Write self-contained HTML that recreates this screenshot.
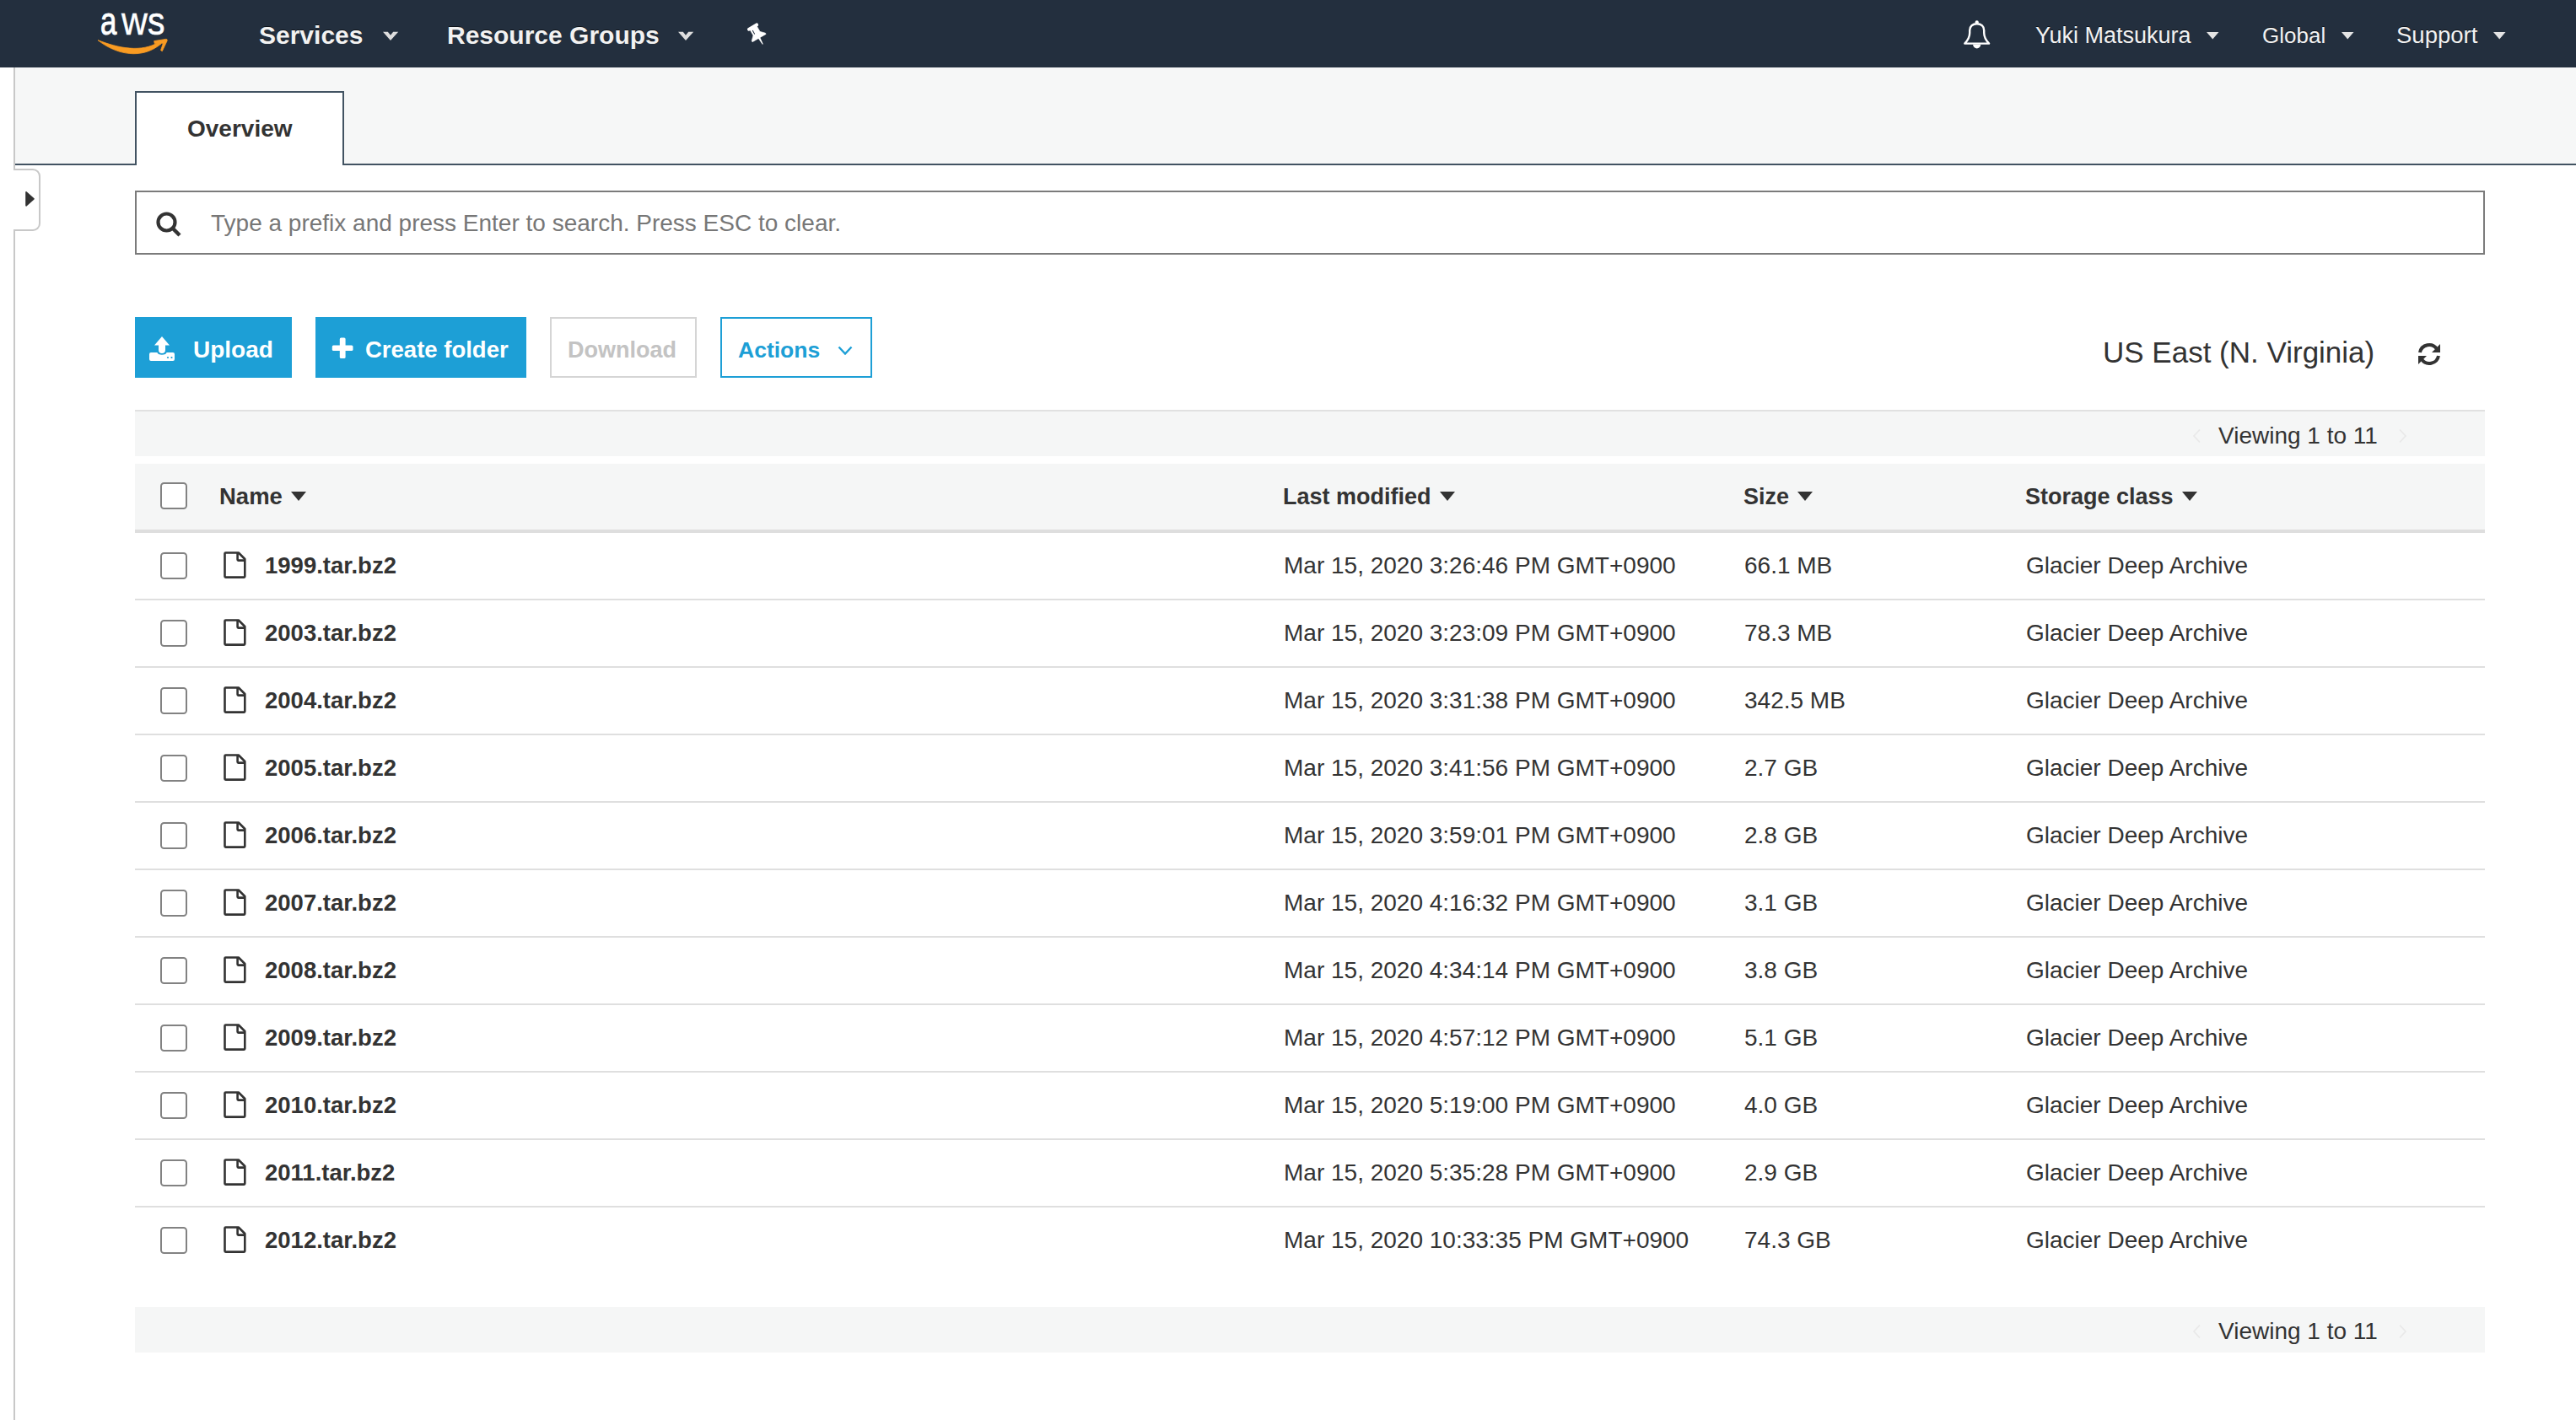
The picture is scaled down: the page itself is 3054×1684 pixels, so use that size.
<!DOCTYPE html>
<html><head><meta charset="utf-8"><title>S3</title>
<style>
html,body{margin:0;padding:0;}
body{width:3054px;height:1684px;position:relative;overflow:hidden;background:#fff;font-family:"Liberation Sans", sans-serif;}
.t{position:absolute;white-space:nowrap;font-family:"Liberation Sans", sans-serif;}
</style></head><body>
<div style="position:absolute;left:0px;top:0px;width:3054px;height:80px;background:#232f3e"></div>
<div class="t" style="left:118.72px;top:1px;font-size:47px;line-height:47px;color:#fff;-webkit-text-stroke:1.0px #fff;transform:scaleX(0.74);transform-origin:0 0">a</div>
<div class="t" style="left:143.60px;top:1px;font-size:47px;line-height:47px;color:#fff;-webkit-text-stroke:0.4px #fff;transform:scaleX(0.91);transform-origin:0 0">w</div>
<div class="t" style="left:175.33px;top:1px;font-size:47px;line-height:47px;color:#fff;-webkit-text-stroke:0.6px #fff;transform:scaleX(0.87);transform-origin:0 0">s</div>
<svg style="position:absolute;left:100px;top:35px" width="110" height="40" viewBox="0 0 110 40"><path d="M16 12.6 C 38 30, 68 36, 91 17 L 89 14.5 C 68 28, 40 22, 16 12.6 Z" fill="#f99b22" stroke="#f99b22" stroke-width="0.8" stroke-linejoin="round"/><path d="M82.7 13.6 L 96.6 11.4 Q 98.6 11.2 98.2 13.2 L 92.3 25.7 L 90.6 24.6 L 93.4 16.3 L 83.2 16.6 Z" fill="#f99b22" stroke="#f99b22" stroke-width="0.8" stroke-linejoin="round"/></svg>
<div class="t" style="left:307px;top:27px;font-size:30px;line-height:30px;font-weight:bold;color:#f2f2f2;text-shadow:0 -1px 0 rgba(0,0,0,0.6)">Services</div>
<div class="t" style="left:530px;top:27px;font-size:30px;line-height:30px;font-weight:bold;color:#f2f2f2;text-shadow:0 -1px 0 rgba(0,0,0,0.6)">Resource Groups</div>
<svg style="position:absolute;left:453px;top:36px" width="20" height="14" viewBox="0 0 20 14"><path d="M1 1.8 H6.8 L10 5.7 L13.2 1.8 H19.2 L10 12 Z" fill="#dedede"/></svg>
<svg style="position:absolute;left:803px;top:36px" width="20" height="14" viewBox="0 0 20 14"><path d="M1 1.8 H6.8 L10 5.7 L13.2 1.8 H19.2 L10 12 Z" fill="#dedede"/></svg>
<svg style="position:absolute;left:870px;top:15px" width="55" height="50" viewBox="0 0 55 50"><g transform="translate(21.6 15.4) rotate(-30)"><rect x="-7.2" y="0" width="14.4" height="3.8" rx="1.6" fill="#fff"/><path d="M-4.6 3 H4.6 V10.8 L9.3 15.5 V16.9 H-9.3 V15.5 L-4.6 10.8 Z" fill="#fff" stroke="#fff" stroke-width="0.6" stroke-linejoin="round"/><path d="M-1.3 16.5 H1.3 L0.5 25.5 H-0.5 Z" fill="#fff"/><path d="M-2.3 5.2 V10.2" stroke="#232f3e" stroke-width="1"/></g></svg>
<svg style="position:absolute;left:2315px;top:15px" width="60" height="55" viewBox="0 0 60 55"><path d="M14.3 36.6 C 17.8 33, 20.2 29.5, 20.2 24 L 20.2 21 C 20.2 16, 23.8 13.2, 28.7 13.2 C 33.6 13.2, 37.2 16, 37.2 21 L 37.2 24 C 37.2 29.5, 39.6 33, 43.1 36.6 Z" fill="none" stroke="#fff" stroke-width="2.4" stroke-linejoin="round"/><circle cx="28.7" cy="11.3" r="2.1" fill="#fff"/><path d="M24.1 37.8 A 4.6 4.6 0 0 0 33.3 37.8 Z" fill="#fff"/></svg>
<div class="t" style="left:2413px;top:29px;font-size:27px;line-height:27px;font-weight:normal;color:#f2f2f2;text-shadow:0 -1px 0 rgba(0,0,0,0.6)">Yuki Matsukura</div>
<svg style="position:absolute;left:2616px;top:38px" width="14.5" height="8.5" viewBox="0 0 14.5 8.5"><path d="M0 0 H14.5 L7.25 8.5 Z" fill="#e4e4e4"/></svg>
<div class="t" style="left:2682px;top:29px;font-size:26px;line-height:26px;font-weight:normal;color:#f2f2f2;text-shadow:0 -1px 0 rgba(0,0,0,0.6)">Global</div>
<svg style="position:absolute;left:2776px;top:38px" width="14.5" height="8.5" viewBox="0 0 14.5 8.5"><path d="M0 0 H14.5 L7.25 8.5 Z" fill="#e4e4e4"/></svg>
<div class="t" style="left:2841px;top:28px;font-size:27.5px;line-height:27.5px;font-weight:normal;color:#f2f2f2;text-shadow:0 -1px 0 rgba(0,0,0,0.6)">Support</div>
<svg style="position:absolute;left:2956px;top:38px" width="14.5" height="8.5" viewBox="0 0 14.5 8.5"><path d="M0 0 H14.5 L7.25 8.5 Z" fill="#e4e4e4"/></svg>
<div style="position:absolute;left:18px;top:80px;width:3036px;height:114px;background:#f6f7f7"></div>
<div style="position:absolute;left:18px;top:194px;width:3036px;height:2px;background:#425362"></div>
<div style="position:absolute;left:16px;top:80px;width:2px;height:122px;background:#c8c8c8"></div>
<div style="position:absolute;left:16px;top:200px;width:32px;height:74px;box-sizing:border-box;border:2px solid #c8c8c8;border-left:none;border-radius:0 9px 9px 0;background:#fff"></div>
<div style="position:absolute;left:16px;top:272px;width:2px;height:1412px;background:#c8c8c8"></div>
<svg style="position:absolute;left:29px;top:226px" width="13" height="20" viewBox="0 0 13 20"><path d="M2 1.8 L11 9.8 L2 17.8 Z" fill="#333" stroke="#333" stroke-width="1.6" stroke-linejoin="round"/></svg>
<div style="position:absolute;left:160px;top:108px;width:248px;height:88px;box-sizing:border-box;border:2px solid #425362;border-bottom:none;background:#fff"></div>
<div class="t" style="left:222px;top:139px;font-size:28px;line-height:28px;font-weight:bold;color:#333;">Overview</div>
<div style="position:absolute;left:160px;top:226px;width:2786px;height:76px;box-sizing:border-box;border:2px solid #7b7b7b;background:#fff"></div>
<svg style="position:absolute;left:183px;top:249px" width="34" height="34" viewBox="0 0 34 34"><circle cx="14.5" cy="14.5" r="10" fill="none" stroke="#333" stroke-width="4.2"/><path d="M21.5 21.5 L30 30" stroke="#333" stroke-width="4.5" stroke-linecap="butt"/></svg>
<div class="t" style="left:250px;top:251px;font-size:28px;line-height:28px;font-weight:normal;color:#777;">Type a prefix and press Enter to search. Press ESC to clear.</div>
<div style="position:absolute;left:160px;top:376px;width:186px;height:72px;background:#1d9fd6"></div>
<svg style="position:absolute;left:176px;top:398px" width="32" height="32" viewBox="0 0 32 32"><path d="M7 11.5 L16 1 L25 11.5 H20 V17 A4 4 0 0 1 12 17 V11.5 Z" fill="#fff"/><path d="M1 22 Q1 20 3 20 H10.5 A 5.5 2.8 0 0 0 21.5 20 H29 Q31 20 31 22 V28 Q31 30 29 30 H3 Q1 30 1 28 Z" fill="#fff"/><circle cx="23" cy="26" r="1.1" fill="#1d9fd6"/><circle cx="27.5" cy="26" r="1.1" fill="#1d9fd6"/></svg>
<div class="t" style="left:229px;top:401px;font-size:28px;line-height:28px;font-weight:bold;color:#fff;">Upload</div>
<div style="position:absolute;left:374px;top:376px;width:250px;height:72px;background:#1d9fd6"></div>
<svg style="position:absolute;left:392px;top:398px" width="28" height="28" viewBox="0 0 28 28"><rect x="10.8" y="2.5" width="6.8" height="24.5" rx="1.6" fill="#fff"/><rect x="1.8" y="11.4" width="24.7" height="6.6" rx="1.6" fill="#fff"/></svg>
<div class="t" style="left:433px;top:401px;font-size:27.5px;line-height:27.5px;font-weight:bold;color:#fff;">Create folder</div>
<div style="position:absolute;left:652px;top:376px;width:174px;height:72px;box-sizing:border-box;border:2px solid #d5d5d5;background:#fff"></div>
<div class="t" style="left:673px;top:402px;font-size:27px;line-height:27px;font-weight:bold;color:#c3c3c3;">Download</div>
<div style="position:absolute;left:854px;top:376px;width:180px;height:72px;box-sizing:border-box;border:2px solid #1d9fd6;background:#fff"></div>
<div class="t" style="left:875px;top:402px;font-size:26.5px;line-height:26.5px;font-weight:bold;color:#1d9fd6;">Actions</div>
<svg style="position:absolute;left:993px;top:410px" width="18" height="11" viewBox="0 0 18 11"><path d="M1.5 1.5 L9.0 9.5 L16.5 1.5" fill="none" stroke="#1d9fd6" stroke-width="2.4"/></svg>
<div class="t" style="left:2493px;top:400px;font-size:35px;line-height:35px;font-weight:normal;color:#333;">US East (N. Virginia)</div>
<svg style="position:absolute;left:2864px;top:405px" width="32" height="30" viewBox="0 0 32 30"><path d="M5 13 A 11 11 0 0 1 25 9" fill="none" stroke="#333" stroke-width="4"/><path d="M29 3 V13 H19 Z" fill="#333"/><path d="M27 17 A 11 11 0 0 1 7 21" fill="none" stroke="#333" stroke-width="4"/><path d="M3 27 V17 H13 Z" fill="#333"/></svg>
<div style="position:absolute;left:160px;top:486px;width:2786px;height:55px;background:#f5f6f6;border-top:2px solid #e1e1e1;box-sizing:border-box"></div>
<div class="t" style="left:2630px;top:503px;font-size:28px;line-height:28px;font-weight:normal;color:#333;">Viewing 1 to 11</div>
<svg style="position:absolute;left:2599px;top:508px" width="11" height="18" viewBox="0 0 11 18"><path d="M9 1.5 L2 9 L9 16.5" fill="none" stroke="#e9e9e9" stroke-width="1.8"/></svg>
<svg style="position:absolute;left:2843px;top:508px" width="11" height="18" viewBox="0 0 11 18"><path d="M2 1.5 L9 9 L2 16.5" fill="none" stroke="#e9e9e9" stroke-width="1.8"/></svg>
<div style="position:absolute;left:160px;top:550px;width:2786px;height:82px;box-sizing:border-box;background:#f5f6f6;border-bottom:4px solid #dedede"></div>
<div style="position:absolute;left:190px;top:572px;width:32px;height:32px;box-sizing:border-box;border:2.2px solid #828282;border-radius:4.5px;background:#fff"></div>
<div class="t" style="left:260px;top:575px;font-size:27.5px;line-height:27.5px;font-weight:bold;color:#333;">Name</div>
<svg style="position:absolute;left:345px;top:583px" width="18" height="11" viewBox="0 0 18 11"><path d="M0 0 H18 L9.0 11 Z" fill="#333"/></svg>
<div class="t" style="left:1521px;top:576px;font-size:27px;line-height:27px;font-weight:bold;color:#333;">Last modified</div>
<svg style="position:absolute;left:1707px;top:583px" width="18" height="11" viewBox="0 0 18 11"><path d="M0 0 H18 L9.0 11 Z" fill="#333"/></svg>
<div class="t" style="left:2067px;top:576px;font-size:27px;line-height:27px;font-weight:bold;color:#333;">Size</div>
<svg style="position:absolute;left:2131px;top:583px" width="18" height="11" viewBox="0 0 18 11"><path d="M0 0 H18 L9.0 11 Z" fill="#333"/></svg>
<div class="t" style="left:2401px;top:576px;font-size:27px;line-height:27px;font-weight:bold;color:#333;">Storage class</div>
<svg style="position:absolute;left:2587px;top:583px" width="18" height="11" viewBox="0 0 18 11"><path d="M0 0 H18 L9.0 11 Z" fill="#333"/></svg>
<div style="position:absolute;left:190px;top:654.5px;width:32px;height:32px;box-sizing:border-box;border:2.2px solid #828282;border-radius:4.5px;background:#fff"></div>
<svg style="position:absolute;left:264px;top:654px" width="29" height="33" viewBox="0 0 29 33"><path d="M2.5 2.5 Q2.5 1.5 3.5 1.5 H18.8 L26.3 9 V29.6 Q26.3 30.6 25.3 30.6 H3.5 Q2.5 30.6 2.5 29.6 Z" fill="none" stroke="#333" stroke-width="2.6" stroke-linejoin="round"/><path d="M17.6 1.5 V9.6 Q17.6 10.6 18.6 10.6 H26.3" fill="none" stroke="#333" stroke-width="2.6" stroke-linejoin="round"/></svg>
<div class="t" style="left:314px;top:657px;font-size:27.5px;line-height:27.5px;font-weight:bold;color:#333;">1999.tar.bz2</div>
<div class="t" style="left:1522px;top:657px;font-size:28px;line-height:28px;font-weight:normal;color:#333;">Mar 15, 2020 3:26:46 PM GMT+0900</div>
<div class="t" style="left:2068px;top:657px;font-size:28px;line-height:28px;font-weight:normal;color:#333;">66.1 MB</div>
<div class="t" style="left:2402px;top:657px;font-size:28px;line-height:28px;font-weight:normal;color:#333;">Glacier Deep Archive</div>
<div style="position:absolute;left:160px;top:710px;width:2786px;height:2px;background:#dfdfdf"></div>
<div style="position:absolute;left:190px;top:734.5px;width:32px;height:32px;box-sizing:border-box;border:2.2px solid #828282;border-radius:4.5px;background:#fff"></div>
<svg style="position:absolute;left:264px;top:734px" width="29" height="33" viewBox="0 0 29 33"><path d="M2.5 2.5 Q2.5 1.5 3.5 1.5 H18.8 L26.3 9 V29.6 Q26.3 30.6 25.3 30.6 H3.5 Q2.5 30.6 2.5 29.6 Z" fill="none" stroke="#333" stroke-width="2.6" stroke-linejoin="round"/><path d="M17.6 1.5 V9.6 Q17.6 10.6 18.6 10.6 H26.3" fill="none" stroke="#333" stroke-width="2.6" stroke-linejoin="round"/></svg>
<div class="t" style="left:314px;top:737px;font-size:27.5px;line-height:27.5px;font-weight:bold;color:#333;">2003.tar.bz2</div>
<div class="t" style="left:1522px;top:737px;font-size:28px;line-height:28px;font-weight:normal;color:#333;">Mar 15, 2020 3:23:09 PM GMT+0900</div>
<div class="t" style="left:2068px;top:737px;font-size:28px;line-height:28px;font-weight:normal;color:#333;">78.3 MB</div>
<div class="t" style="left:2402px;top:737px;font-size:28px;line-height:28px;font-weight:normal;color:#333;">Glacier Deep Archive</div>
<div style="position:absolute;left:160px;top:790px;width:2786px;height:2px;background:#dfdfdf"></div>
<div style="position:absolute;left:190px;top:814.5px;width:32px;height:32px;box-sizing:border-box;border:2.2px solid #828282;border-radius:4.5px;background:#fff"></div>
<svg style="position:absolute;left:264px;top:814px" width="29" height="33" viewBox="0 0 29 33"><path d="M2.5 2.5 Q2.5 1.5 3.5 1.5 H18.8 L26.3 9 V29.6 Q26.3 30.6 25.3 30.6 H3.5 Q2.5 30.6 2.5 29.6 Z" fill="none" stroke="#333" stroke-width="2.6" stroke-linejoin="round"/><path d="M17.6 1.5 V9.6 Q17.6 10.6 18.6 10.6 H26.3" fill="none" stroke="#333" stroke-width="2.6" stroke-linejoin="round"/></svg>
<div class="t" style="left:314px;top:817px;font-size:27.5px;line-height:27.5px;font-weight:bold;color:#333;">2004.tar.bz2</div>
<div class="t" style="left:1522px;top:817px;font-size:28px;line-height:28px;font-weight:normal;color:#333;">Mar 15, 2020 3:31:38 PM GMT+0900</div>
<div class="t" style="left:2068px;top:817px;font-size:28px;line-height:28px;font-weight:normal;color:#333;">342.5 MB</div>
<div class="t" style="left:2402px;top:817px;font-size:28px;line-height:28px;font-weight:normal;color:#333;">Glacier Deep Archive</div>
<div style="position:absolute;left:160px;top:870px;width:2786px;height:2px;background:#dfdfdf"></div>
<div style="position:absolute;left:190px;top:894.5px;width:32px;height:32px;box-sizing:border-box;border:2.2px solid #828282;border-radius:4.5px;background:#fff"></div>
<svg style="position:absolute;left:264px;top:894px" width="29" height="33" viewBox="0 0 29 33"><path d="M2.5 2.5 Q2.5 1.5 3.5 1.5 H18.8 L26.3 9 V29.6 Q26.3 30.6 25.3 30.6 H3.5 Q2.5 30.6 2.5 29.6 Z" fill="none" stroke="#333" stroke-width="2.6" stroke-linejoin="round"/><path d="M17.6 1.5 V9.6 Q17.6 10.6 18.6 10.6 H26.3" fill="none" stroke="#333" stroke-width="2.6" stroke-linejoin="round"/></svg>
<div class="t" style="left:314px;top:897px;font-size:27.5px;line-height:27.5px;font-weight:bold;color:#333;">2005.tar.bz2</div>
<div class="t" style="left:1522px;top:897px;font-size:28px;line-height:28px;font-weight:normal;color:#333;">Mar 15, 2020 3:41:56 PM GMT+0900</div>
<div class="t" style="left:2068px;top:897px;font-size:28px;line-height:28px;font-weight:normal;color:#333;">2.7 GB</div>
<div class="t" style="left:2402px;top:897px;font-size:28px;line-height:28px;font-weight:normal;color:#333;">Glacier Deep Archive</div>
<div style="position:absolute;left:160px;top:950px;width:2786px;height:2px;background:#dfdfdf"></div>
<div style="position:absolute;left:190px;top:974.5px;width:32px;height:32px;box-sizing:border-box;border:2.2px solid #828282;border-radius:4.5px;background:#fff"></div>
<svg style="position:absolute;left:264px;top:974px" width="29" height="33" viewBox="0 0 29 33"><path d="M2.5 2.5 Q2.5 1.5 3.5 1.5 H18.8 L26.3 9 V29.6 Q26.3 30.6 25.3 30.6 H3.5 Q2.5 30.6 2.5 29.6 Z" fill="none" stroke="#333" stroke-width="2.6" stroke-linejoin="round"/><path d="M17.6 1.5 V9.6 Q17.6 10.6 18.6 10.6 H26.3" fill="none" stroke="#333" stroke-width="2.6" stroke-linejoin="round"/></svg>
<div class="t" style="left:314px;top:977px;font-size:27.5px;line-height:27.5px;font-weight:bold;color:#333;">2006.tar.bz2</div>
<div class="t" style="left:1522px;top:977px;font-size:28px;line-height:28px;font-weight:normal;color:#333;">Mar 15, 2020 3:59:01 PM GMT+0900</div>
<div class="t" style="left:2068px;top:977px;font-size:28px;line-height:28px;font-weight:normal;color:#333;">2.8 GB</div>
<div class="t" style="left:2402px;top:977px;font-size:28px;line-height:28px;font-weight:normal;color:#333;">Glacier Deep Archive</div>
<div style="position:absolute;left:160px;top:1030px;width:2786px;height:2px;background:#dfdfdf"></div>
<div style="position:absolute;left:190px;top:1054.5px;width:32px;height:32px;box-sizing:border-box;border:2.2px solid #828282;border-radius:4.5px;background:#fff"></div>
<svg style="position:absolute;left:264px;top:1054px" width="29" height="33" viewBox="0 0 29 33"><path d="M2.5 2.5 Q2.5 1.5 3.5 1.5 H18.8 L26.3 9 V29.6 Q26.3 30.6 25.3 30.6 H3.5 Q2.5 30.6 2.5 29.6 Z" fill="none" stroke="#333" stroke-width="2.6" stroke-linejoin="round"/><path d="M17.6 1.5 V9.6 Q17.6 10.6 18.6 10.6 H26.3" fill="none" stroke="#333" stroke-width="2.6" stroke-linejoin="round"/></svg>
<div class="t" style="left:314px;top:1057px;font-size:27.5px;line-height:27.5px;font-weight:bold;color:#333;">2007.tar.bz2</div>
<div class="t" style="left:1522px;top:1057px;font-size:28px;line-height:28px;font-weight:normal;color:#333;">Mar 15, 2020 4:16:32 PM GMT+0900</div>
<div class="t" style="left:2068px;top:1057px;font-size:28px;line-height:28px;font-weight:normal;color:#333;">3.1 GB</div>
<div class="t" style="left:2402px;top:1057px;font-size:28px;line-height:28px;font-weight:normal;color:#333;">Glacier Deep Archive</div>
<div style="position:absolute;left:160px;top:1110px;width:2786px;height:2px;background:#dfdfdf"></div>
<div style="position:absolute;left:190px;top:1134.5px;width:32px;height:32px;box-sizing:border-box;border:2.2px solid #828282;border-radius:4.5px;background:#fff"></div>
<svg style="position:absolute;left:264px;top:1134px" width="29" height="33" viewBox="0 0 29 33"><path d="M2.5 2.5 Q2.5 1.5 3.5 1.5 H18.8 L26.3 9 V29.6 Q26.3 30.6 25.3 30.6 H3.5 Q2.5 30.6 2.5 29.6 Z" fill="none" stroke="#333" stroke-width="2.6" stroke-linejoin="round"/><path d="M17.6 1.5 V9.6 Q17.6 10.6 18.6 10.6 H26.3" fill="none" stroke="#333" stroke-width="2.6" stroke-linejoin="round"/></svg>
<div class="t" style="left:314px;top:1137px;font-size:27.5px;line-height:27.5px;font-weight:bold;color:#333;">2008.tar.bz2</div>
<div class="t" style="left:1522px;top:1137px;font-size:28px;line-height:28px;font-weight:normal;color:#333;">Mar 15, 2020 4:34:14 PM GMT+0900</div>
<div class="t" style="left:2068px;top:1137px;font-size:28px;line-height:28px;font-weight:normal;color:#333;">3.8 GB</div>
<div class="t" style="left:2402px;top:1137px;font-size:28px;line-height:28px;font-weight:normal;color:#333;">Glacier Deep Archive</div>
<div style="position:absolute;left:160px;top:1190px;width:2786px;height:2px;background:#dfdfdf"></div>
<div style="position:absolute;left:190px;top:1214.5px;width:32px;height:32px;box-sizing:border-box;border:2.2px solid #828282;border-radius:4.5px;background:#fff"></div>
<svg style="position:absolute;left:264px;top:1214px" width="29" height="33" viewBox="0 0 29 33"><path d="M2.5 2.5 Q2.5 1.5 3.5 1.5 H18.8 L26.3 9 V29.6 Q26.3 30.6 25.3 30.6 H3.5 Q2.5 30.6 2.5 29.6 Z" fill="none" stroke="#333" stroke-width="2.6" stroke-linejoin="round"/><path d="M17.6 1.5 V9.6 Q17.6 10.6 18.6 10.6 H26.3" fill="none" stroke="#333" stroke-width="2.6" stroke-linejoin="round"/></svg>
<div class="t" style="left:314px;top:1217px;font-size:27.5px;line-height:27.5px;font-weight:bold;color:#333;">2009.tar.bz2</div>
<div class="t" style="left:1522px;top:1217px;font-size:28px;line-height:28px;font-weight:normal;color:#333;">Mar 15, 2020 4:57:12 PM GMT+0900</div>
<div class="t" style="left:2068px;top:1217px;font-size:28px;line-height:28px;font-weight:normal;color:#333;">5.1 GB</div>
<div class="t" style="left:2402px;top:1217px;font-size:28px;line-height:28px;font-weight:normal;color:#333;">Glacier Deep Archive</div>
<div style="position:absolute;left:160px;top:1270px;width:2786px;height:2px;background:#dfdfdf"></div>
<div style="position:absolute;left:190px;top:1294.5px;width:32px;height:32px;box-sizing:border-box;border:2.2px solid #828282;border-radius:4.5px;background:#fff"></div>
<svg style="position:absolute;left:264px;top:1294px" width="29" height="33" viewBox="0 0 29 33"><path d="M2.5 2.5 Q2.5 1.5 3.5 1.5 H18.8 L26.3 9 V29.6 Q26.3 30.6 25.3 30.6 H3.5 Q2.5 30.6 2.5 29.6 Z" fill="none" stroke="#333" stroke-width="2.6" stroke-linejoin="round"/><path d="M17.6 1.5 V9.6 Q17.6 10.6 18.6 10.6 H26.3" fill="none" stroke="#333" stroke-width="2.6" stroke-linejoin="round"/></svg>
<div class="t" style="left:314px;top:1297px;font-size:27.5px;line-height:27.5px;font-weight:bold;color:#333;">2010.tar.bz2</div>
<div class="t" style="left:1522px;top:1297px;font-size:28px;line-height:28px;font-weight:normal;color:#333;">Mar 15, 2020 5:19:00 PM GMT+0900</div>
<div class="t" style="left:2068px;top:1297px;font-size:28px;line-height:28px;font-weight:normal;color:#333;">4.0 GB</div>
<div class="t" style="left:2402px;top:1297px;font-size:28px;line-height:28px;font-weight:normal;color:#333;">Glacier Deep Archive</div>
<div style="position:absolute;left:160px;top:1350px;width:2786px;height:2px;background:#dfdfdf"></div>
<div style="position:absolute;left:190px;top:1374.5px;width:32px;height:32px;box-sizing:border-box;border:2.2px solid #828282;border-radius:4.5px;background:#fff"></div>
<svg style="position:absolute;left:264px;top:1374px" width="29" height="33" viewBox="0 0 29 33"><path d="M2.5 2.5 Q2.5 1.5 3.5 1.5 H18.8 L26.3 9 V29.6 Q26.3 30.6 25.3 30.6 H3.5 Q2.5 30.6 2.5 29.6 Z" fill="none" stroke="#333" stroke-width="2.6" stroke-linejoin="round"/><path d="M17.6 1.5 V9.6 Q17.6 10.6 18.6 10.6 H26.3" fill="none" stroke="#333" stroke-width="2.6" stroke-linejoin="round"/></svg>
<div class="t" style="left:314px;top:1377px;font-size:27.5px;line-height:27.5px;font-weight:bold;color:#333;">2011.tar.bz2</div>
<div class="t" style="left:1522px;top:1377px;font-size:28px;line-height:28px;font-weight:normal;color:#333;">Mar 15, 2020 5:35:28 PM GMT+0900</div>
<div class="t" style="left:2068px;top:1377px;font-size:28px;line-height:28px;font-weight:normal;color:#333;">2.9 GB</div>
<div class="t" style="left:2402px;top:1377px;font-size:28px;line-height:28px;font-weight:normal;color:#333;">Glacier Deep Archive</div>
<div style="position:absolute;left:160px;top:1430px;width:2786px;height:2px;background:#dfdfdf"></div>
<div style="position:absolute;left:190px;top:1454.5px;width:32px;height:32px;box-sizing:border-box;border:2.2px solid #828282;border-radius:4.5px;background:#fff"></div>
<svg style="position:absolute;left:264px;top:1454px" width="29" height="33" viewBox="0 0 29 33"><path d="M2.5 2.5 Q2.5 1.5 3.5 1.5 H18.8 L26.3 9 V29.6 Q26.3 30.6 25.3 30.6 H3.5 Q2.5 30.6 2.5 29.6 Z" fill="none" stroke="#333" stroke-width="2.6" stroke-linejoin="round"/><path d="M17.6 1.5 V9.6 Q17.6 10.6 18.6 10.6 H26.3" fill="none" stroke="#333" stroke-width="2.6" stroke-linejoin="round"/></svg>
<div class="t" style="left:314px;top:1457px;font-size:27.5px;line-height:27.5px;font-weight:bold;color:#333;">2012.tar.bz2</div>
<div class="t" style="left:1522px;top:1457px;font-size:28px;line-height:28px;font-weight:normal;color:#333;">Mar 15, 2020 10:33:35 PM GMT+0900</div>
<div class="t" style="left:2068px;top:1457px;font-size:28px;line-height:28px;font-weight:normal;color:#333;">74.3 GB</div>
<div class="t" style="left:2402px;top:1457px;font-size:28px;line-height:28px;font-weight:normal;color:#333;">Glacier Deep Archive</div>
<div style="position:absolute;left:160px;top:1550px;width:2786px;height:54px;background:#f5f6f6"></div>
<div class="t" style="left:2630px;top:1565px;font-size:28px;line-height:28px;font-weight:normal;color:#333;">Viewing 1 to 11</div>
<svg style="position:absolute;left:2599px;top:1570px" width="11" height="18" viewBox="0 0 11 18"><path d="M9 1.5 L2 9 L9 16.5" fill="none" stroke="#e9e9e9" stroke-width="1.8"/></svg>
<svg style="position:absolute;left:2843px;top:1570px" width="11" height="18" viewBox="0 0 11 18"><path d="M2 1.5 L9 9 L2 16.5" fill="none" stroke="#e9e9e9" stroke-width="1.8"/></svg>
<script>(function(){var w=window.innerWidth;if(w&&Math.abs(w-3054)>2){document.documentElement.style.zoom=w/3054;}})();</script>
</body></html>
